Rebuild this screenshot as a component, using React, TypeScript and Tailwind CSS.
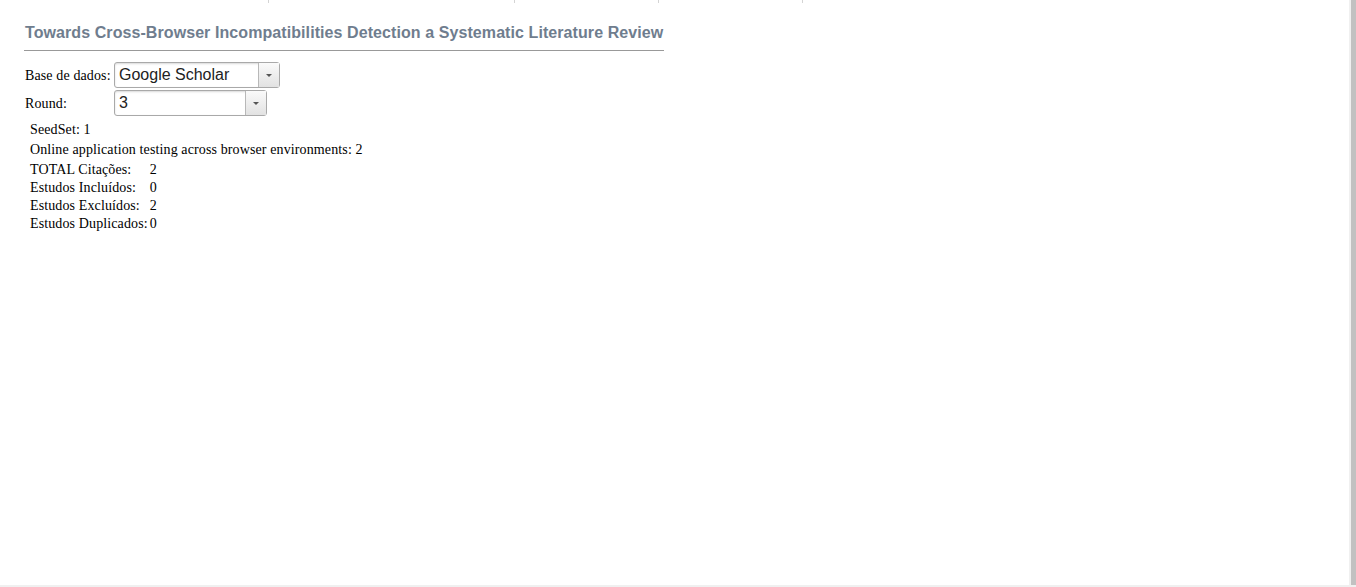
const ROWS = [
  { label: "TOTAL Citações:", value: "2" },
  { label: "Estudos Incluídos:", value: "0" },
  { label: "Estudos Excluídos:", value: "2" },
  { label: "Estudos Duplicados:", value: "0" },
];

function ComboBox({ value, width }: { value: string; width: string }) {
  return (
    <div className={`flex h-[26px] ${width} rounded-[3px] border border-[#a9a9a9] bg-white shadow-[inset_0_1px_2px_rgba(0,0,0,0.15)]`}>
      <div className="flex-1 pl-[4px] text-[16px] leading-[24px] tracking-normal text-[#222] font-['Liberation_Sans',Arial,sans-serif]">
        {value}
      </div>
      <div className="flex w-[21px] items-center justify-center border-l border-[#b8b8b8] bg-gradient-to-b from-[#fafafa] to-[#e2e2e2]">
        <span className="block h-0 w-0 border-x-[3px] border-t-[3px] border-x-transparent border-t-[#555]" />
      </div>
    </div>
  );
}

export default function App() {
  return (
    <div className="relative h-[587px] w-[1356px] overflow-hidden bg-white font-['Liberation_Serif','Times_New_Roman',serif] text-[14px] tracking-[0.12px] text-black">
      {/* faint tab marks at the top edge */}
      <div className="flex h-[3px]">
        <div className="w-[268px]" />
        <div className="w-px bg-[#d4d4d4]" />
        <div className="w-[245px]" />
        <div className="w-px bg-[#d4d4d4]" />
        <div className="w-[143px]" />
        <div className="w-px bg-[#d4d4d4]" />
        <div className="w-[143px]" />
        <div className="w-px bg-[#d4d4d4]" />
      </div>

      <div className="pl-[24px] pt-[20px]">
        <h1 className="w-[640px] border-b border-[#999] pb-[7px] pl-px text-[16px] font-bold leading-[20px] tracking-[0.08px] text-[#6f7d8e] font-['Liberation_Sans',Arial,sans-serif]">
          Towards Cross-Browser Incompatibilities Detection a Systematic Literature Review
        </h1>

        <div className="mt-[11px] flex flex-col gap-[2px]">
          <div className="flex items-center">
            <span className="w-[90px] pl-px">Base de dados:</span>
            <ComboBox value="Google Scholar" width="w-[166px]" />
          </div>
          <div className="flex items-center">
            <span className="w-[90px] pl-px">Round:</span>
            <ComboBox value="3" width="w-[153px]" />
          </div>
        </div>

        <div className="mt-[4px] pl-[6px]">
          <div className="leading-[20px]">SeedSet: 1</div>
          <div className="leading-[20px]">Online application testing across browser environments: 2</div>
          <table className="mt-px border-collapse">
            <tbody>
              {ROWS.map(r => (
                <tr key={r.label}>
                  <td className="p-0 pr-[2px] leading-[18px]">{r.label}</td>
                  <td className="p-0 leading-[18px]">{r.value}</td>
                </tr>
              ))}
            </tbody>
          </table>
        </div>
      </div>

      {/* scrollbar edge */}
      <div className="absolute right-0 top-0 flex h-[585px] w-[7px]">
        <div className="w-[2px] bg-[#f0f0f0]" />
        <div className="flex-1 bg-[#c1c1c1]" />
      </div>
      <div className="absolute bottom-0 left-0 h-[2px] w-full bg-[#f0f0f0]" />
    </div>
  );
}
